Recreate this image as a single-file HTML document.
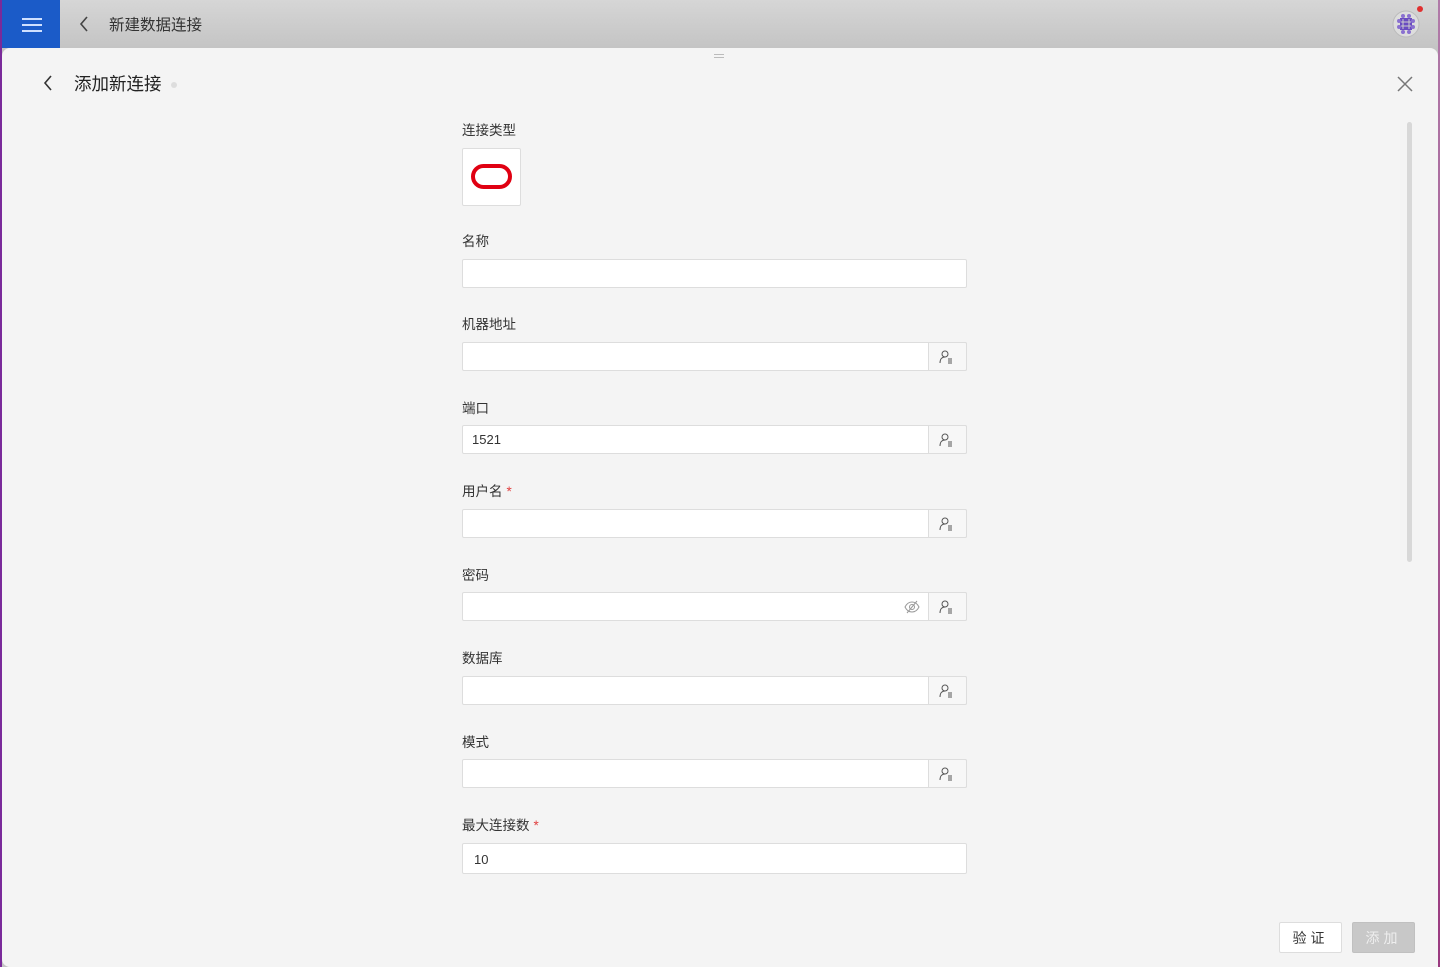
<!DOCTYPE html><html><head><meta charset="utf-8"><style>
*{box-sizing:border-box;margin:0;padding:0}
body{width:1440px;height:967px;overflow:hidden;background:linear-gradient(#d6d6d6,#c4c4c4 48px);font-family:"Liberation Sans","Noto Sans CJK SC",sans-serif;position:relative}
.lb{position:absolute;left:0;top:0;width:2px;height:967px;background:#7a2a9a}
.rb{position:absolute;right:0;top:0;width:2px;height:967px;background:linear-gradient(#b07aa8,#9a3a80)}
.menu{position:absolute;left:2px;top:0;width:58px;height:48px;background:#1b5bc8}
.menu i{position:absolute;left:20px;width:20px;height:2px;background:#cfe0ff}
.t1{position:absolute;left:109px;top:13px;font-size:15.5px;color:#333}
.panel{position:absolute;left:2px;top:48px;width:1436px;height:919px;background:#f4f4f4;border-radius:8px 8px 0 8px}
.lab{position:absolute;left:462px;font-size:13.5px;color:#333;margin-top:-2px}
.lab b{color:#e04040;font-weight:normal;margin-left:4px}
.in{position:absolute;left:462px;width:505px;height:29px;background:#fff;border:1px solid #ddd;border-radius:2px;font-size:13px;color:#333;padding:6px 10px}
.btn{position:absolute;right:-1px;top:-1px;width:39px;height:29px;border:1px solid #ddd;background:#f7f7f7;border-radius:0 2px 2px 0}
.btn svg{position:absolute;left:10px;top:7px}
.b{position:absolute;top:922px;width:63px;height:31px;font-size:14px;text-align:center;line-height:31px;letter-spacing:4px;border-radius:2px}
</style></head><body>
<div class="lb"></div><div class="rb"></div>
<div class="menu"><i style="top:18px"></i><i style="top:24px"></i><i style="top:30px"></i></div>
<svg style="position:absolute;left:78px;top:16px" width="12" height="16"><path d="M9 1L3 8l6 7" stroke="#444" stroke-width="1.6" fill="none"/></svg>
<div class="t1">新建数据连接</div>
<svg style="position:absolute;left:1392px;top:10px" width="30" height="30"><circle cx="14" cy="14" r="13" fill="#ddd" stroke="#bbb"/><rect x="8" y="8" width="12" height="12" fill="#6a4cc0"/><g fill="#8a70d0"><circle cx="7" cy="11" r="2"/><circle cx="7" cy="17" r="2"/><circle cx="21" cy="11" r="2"/><circle cx="21" cy="17" r="2"/><circle cx="11" cy="6" r="2"/><circle cx="17" cy="6" r="2"/><circle cx="11" cy="22" r="2"/><circle cx="17" cy="22" r="2"/></g><path d="M11 9v10M17 9v10M9 12h10M9 16h10" stroke="#ccc"/></svg>
<div style="position:absolute;left:1417px;top:6px;width:6px;height:6px;border-radius:3px;background:#e03030"></div>
<div class="panel">
<div style="position:absolute;left:712px;top:6px;width:10px;height:4px;border-top:1px solid #bbb;border-bottom:1px solid #bbb"></div>
<svg style="position:absolute;left:40px;top:27px" width="12" height="16"><path d="M9 1L3 8l6 7" stroke="#333" stroke-width="1.6" fill="none"/></svg>
<div style="position:absolute;left:72px;top:23px;font-size:17.5px;color:#222">添加新连接</div>
<div style="position:absolute;left:169px;top:34px;width:6px;height:6px;border-radius:3px;background:#ddd"></div>
<svg style="position:absolute;left:1395px;top:28px" width="16" height="16"><path d="M1 1l14 14M15 1L1 15" stroke="#777" stroke-width="1.5"/></svg>
<div style="position:absolute;left:1405px;top:74px;width:5px;height:440px;border-radius:3px;background:#d8d8d8"></div>
</div>
<div class="lab" style="top:121px">连接类型</div>
<div style="position:absolute;left:462px;top:148px;width:59px;height:58px;background:#fff;border:1px solid #ddd;border-radius:2px"></div>
<div style="position:absolute;left:471px;top:164px;width:41px;height:25px;border:4px solid #e00012;border-radius:13px"></div>
<div class="lab" style="top:232px">名称</div>
<div class="in" style="top:259px"></div>
<div class="lab" style="top:315px">机器地址</div>
<div class="in" style="top:342px"><div class="btn"><svg width="14" height="14"><circle cx="6" cy="4" r="3" stroke="#555" fill="none"/><path d="M1 13c0-4 2-6 5-6M9 9h4M9 11h4M9 13h4" stroke="#555" fill="none"/></svg></div></div>
<div class="lab" style="top:399px">端口</div>
<div class="in" style="top:425px;padding-left:9px">1521<div class="btn"><svg width="14" height="14"><circle cx="6" cy="4" r="3" stroke="#555" fill="none"/><path d="M1 13c0-4 2-6 5-6M9 9h4M9 11h4M9 13h4" stroke="#555" fill="none"/></svg></div></div>
<div class="lab" style="top:482px">用户名<b>*</b></div>
<div class="in" style="top:509px"><div class="btn"><svg width="14" height="14"><circle cx="6" cy="4" r="3" stroke="#555" fill="none"/><path d="M1 13c0-4 2-6 5-6M9 9h4M9 11h4M9 13h4" stroke="#555" fill="none"/></svg></div></div>
<div class="lab" style="top:566px">密码</div>
<div class="in" style="top:592px"><svg style="position:absolute;left:441px;top:7px" width="16" height="14"><path d="M1 7c2-4 5-5 7-5s5 1 7 5c-2 4-5 5-7 5s-5-1-7-5z" stroke="#999" fill="none"/><circle cx="8" cy="7" r="2.5" stroke="#999" fill="none"/><path d="M3 13L13 1" stroke="#999"/></svg><div class="btn"><svg width="14" height="14"><circle cx="6" cy="4" r="3" stroke="#555" fill="none"/><path d="M1 13c0-4 2-6 5-6M9 9h4M9 11h4M9 13h4" stroke="#555" fill="none"/></svg></div></div>
<div class="lab" style="top:649px">数据库</div>
<div class="in" style="top:676px"><div class="btn"><svg width="14" height="14"><circle cx="6" cy="4" r="3" stroke="#555" fill="none"/><path d="M1 13c0-4 2-6 5-6M9 9h4M9 11h4M9 13h4" stroke="#555" fill="none"/></svg></div></div>
<div class="lab" style="top:733px">模式</div>
<div class="in" style="top:759px"><div class="btn"><svg width="14" height="14"><circle cx="6" cy="4" r="3" stroke="#555" fill="none"/><path d="M1 13c0-4 2-6 5-6M9 9h4M9 11h4M9 13h4" stroke="#555" fill="none"/></svg></div></div>
<div class="lab" style="top:816px">最大连接数<b>*</b></div>
<div class="in" style="top:843px;height:31px;padding:8px 11px">10</div>
<div class="b" style="left:1279px;background:#fff;border:1px solid #ddd;color:#333">验证</div>
<div class="b" style="left:1352px;background:#c8c8c8;border:1px solid #c0c0c0;color:#eee">添加</div>
</body></html>
